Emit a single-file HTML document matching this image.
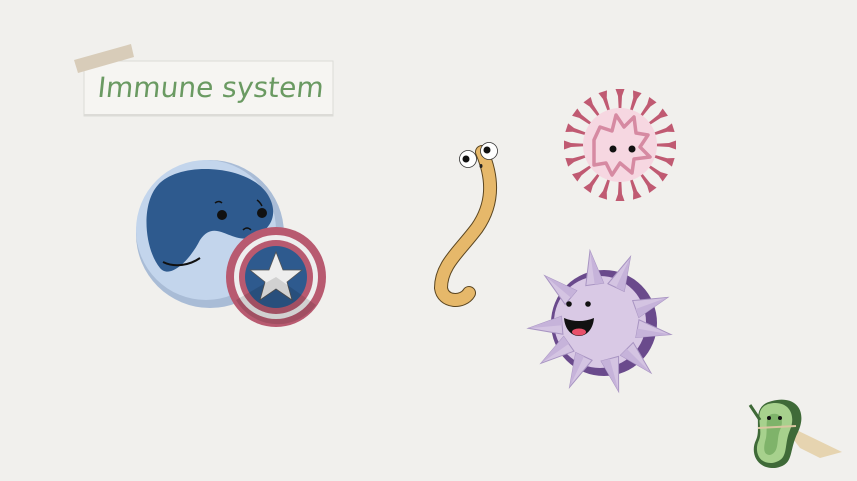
<!DOCTYPE html>
<html><head><meta charset="utf-8"><style>
html,body{margin:0;padding:0;background:#f1f0ed;}
body{width:857px;height:481px;overflow:hidden;position:relative;font-family:"Liberation Sans",sans-serif;}
</style></head><body>
<svg width="857" height="481" viewBox="0 0 857 481" xmlns="http://www.w3.org/2000/svg" style="position:absolute;left:0;top:0">
<defs>
<g id="vs"><path d="M-1.3,-36 L1.3,-36 L2,-49 L4.5,-56 L-4.5,-56 L-2,-49 Z" fill="#c05a72"/></g>
<g id="us"><path d="M-9,-38 L9,-38 L0,-72 Z" fill="#d4c4e2" stroke="#a894c2" stroke-width="1"/><path d="M0,-38 L0,-72 L9,-38 Z" fill="#c6b3da"/></g>
</defs>
<rect width="857" height="481" fill="#f1f0ed"/>
<rect x="84" y="61" width="249" height="55" fill="#f6f5f2" stroke="#dcdbd7" stroke-width="1"/>
<rect x="84" y="114" width="249" height="2" fill="#dcdbd7"/>
<polygon points="74,60 131,44 134,57 78,73" fill="#d8ccb9"/>
<text x="97" y="97" font-family="'DejaVu Sans', 'Liberation Sans', sans-serif" font-size="28" fill="#6a9a62" textLength="226" lengthAdjust="spacingAndGlyphs" transform="skewX(-6) translate(10,0)">Immune system</text>
<!-- B cell -->
<circle cx="210" cy="234" r="74" fill="#a9bcd6"/>
<circle cx="206" cy="230" r="70" fill="#c3d5ec"/>
<path d="M158,185 C180,160 250,165 268,195 C280,215 270,232 250,238 C230,243 215,218 200,240 C190,260 170,280 160,268 C145,250 140,205 158,185 Z" fill="#2e5a8e"/>
<path d="M163,262 C175,268 190,265 200,258" stroke="#111" stroke-width="2" fill="none"/>
<circle cx="222" cy="215" r="5" fill="#111"/><circle cx="262" cy="213" r="5" fill="#111"/>
<path d="M215,203 q4,-3 7,0 M257,200 q3,2 5,6 M243,230 q4,-4 8,0" stroke="#111" stroke-width="1.5" fill="none"/>
<circle cx="276" cy="277" r="50" fill="#b85a70"/>
<circle cx="276" cy="277" r="42" fill="#eeeeee"/>
<circle cx="276" cy="277" r="37" fill="#b85a70"/>
<circle cx="276" cy="277" r="31" fill="#2e5a8e"/>
<polygon points="276,252 283,270 302,270 287,282 292,300 276,289 260,300 265,282 250,270 269,270" fill="#eeeeee" stroke="#555" stroke-width="0.8"/>
<path d="M236,300 A48,48 0 0 0 316,305 L276,277 Z" fill="#000" opacity="0.12"/>
<!-- worm -->
<path d="M482,152 C494,180 493,205 477,228 C459,252 441,265 441,288 C443,303 463,303 469,293" stroke="#5a4520" stroke-width="14" fill="none" stroke-linecap="round"/>
<path d="M482,152 C494,180 493,205 477,228 C459,252 441,265 441,288 C443,303 463,303 469,293" stroke="#e6b86a" stroke-width="12" fill="none" stroke-linecap="round"/>
<circle cx="468" cy="159" r="8.5" fill="#fff" stroke="#333" stroke-width="0.8"/><circle cx="466" cy="159" r="3.5" fill="#111"/>
<circle cx="489" cy="151" r="8.5" fill="#fff" stroke="#333" stroke-width="0.8"/><circle cx="487" cy="150" r="3.5" fill="#111"/>
<ellipse cx="481" cy="166" rx="1.5" ry="2" fill="#222"/>
<!-- virus -->
<g transform="translate(620,145)">
<use href="#vs"/><use href="#vs" transform="rotate(18)"/><use href="#vs" transform="rotate(36)"/><use href="#vs" transform="rotate(54)"/><use href="#vs" transform="rotate(72)"/><use href="#vs" transform="rotate(90)"/><use href="#vs" transform="rotate(108)"/><use href="#vs" transform="rotate(126)"/><use href="#vs" transform="rotate(144)"/><use href="#vs" transform="rotate(162)"/><use href="#vs" transform="rotate(180)"/><use href="#vs" transform="rotate(198)"/><use href="#vs" transform="rotate(216)"/><use href="#vs" transform="rotate(234)"/><use href="#vs" transform="rotate(252)"/><use href="#vs" transform="rotate(270)"/><use href="#vs" transform="rotate(288)"/><use href="#vs" transform="rotate(306)"/><use href="#vs" transform="rotate(324)"/><use href="#vs" transform="rotate(342)"/>
<circle r="37" fill="#f6d7e1"/>
<path d="M-26,-5 L-20,-18 L-8,-14 L-4,-30 L4,-18 L14,-28 L16,-12 L28,-10 L20,2 L30,12 L14,14 L12,28 L0,18 L-8,30 L-14,18 L-26,20 Z" fill="none" stroke="#d68aa2" stroke-width="3.5" stroke-linejoin="round"/>
<circle cx="-7" cy="4" r="3.5" fill="#111"/><circle cx="12" cy="4" r="3.5" fill="#111"/>
</g>
<!-- urchin -->
<circle cx="604" cy="323" r="53" fill="#6a4a8c"/>
<g transform="translate(600,322)">
<circle r="46" fill="#d9c9e5"/>
<use href="#us" transform="rotate(-50)"/><use href="#us" transform="rotate(-8)"/><use href="#us" transform="rotate(25)"/><use href="#us" transform="rotate(70)"/><use href="#us" transform="rotate(100)"/><use href="#us" transform="rotate(135)"/><use href="#us" transform="rotate(165)"/><use href="#us" transform="rotate(-155)"/><use href="#us" transform="rotate(-95)"/><use href="#us" transform="rotate(-125)"/>
<path d="M-36,-4 C-34,20 -8,20 -6,-4 C-16,0 -26,0 -36,-4 Z" fill="#111"/>
<ellipse cx="-21" cy="10" rx="7" ry="3.5" fill="#e8506a"/>
<circle cx="-31" cy="-18" r="2.8" fill="#111"/><circle cx="-12" cy="-18" r="2.8" fill="#111"/>
</g>
<!-- bean hero -->
<path d="M780,422 L842,452 L820,458 L800,448 Z" fill="#e6d4b0"/>
<path d="M772,401 C795,395 808,410 798,432 C788,452 795,465 775,468 C756,469 750,452 756,440 C762,428 750,406 772,401 Z" fill="#3f6a38"/>
<path d="M768,404 C787,399 797,413 790,430 C783,447 790,460 772,463 C758,464 754,450 759,440 C764,428 752,410 768,404 Z" fill="#a7d18d"/>
<path d="M772,414 C782,412 784,422 780,430 C776,440 780,452 770,455 C762,455 764,445 766,438 C768,428 764,416 772,414 Z" fill="#7fb36a"/>
<path d="M758,428 L796,426" stroke="#d9c6a0" stroke-width="2"/>
<path d="M760,420 L750,405" stroke="#3f6a38" stroke-width="3"/>
<circle cx="769" cy="418" r="2" fill="#111"/><circle cx="780" cy="418" r="2" fill="#111"/>
</svg>
</body></html>
